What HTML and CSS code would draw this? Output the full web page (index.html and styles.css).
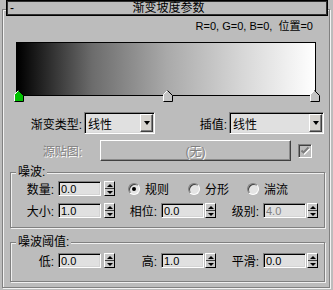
FILE: index.html
```html
<!DOCTYPE html>
<html lang="zh">
  <head>
    <meta charset="UTF-8" />
    <meta name="viewport" content="width=device-width, initial-scale=1.0" />
    <title>渐变坡度参数</title>
    <link rel="stylesheet" href="styles.css">
  </head>
  <body>
    <div class="rollout">
      <div class="title">
        <span class="minus">-</span>
        <span class="title-text">渐变坡度参数</span>
        <span></span>
      </div>

      <div class="info">R=0, G=0, B=0,&nbsp; 位置=0</div>

      <div class="ramp">
        <svg class="flag" style="left: calc(0% - 4px)" width="10" height="12" viewBox="0 0 10 12">
          <path d="M0.5 11.5V4.5L4.5 0.5L9.5 5.5V11.5Z" fill="#00c000" />
          <path d="M0.5 11.5V4.5L4.5 0.5" stroke="#fff" fill="none" />
          <path d="M4.5 0.5L9.5 5.5V11.5H0.5" stroke="#000" fill="none" />
        </svg>
        <svg class="flag" style="left: calc(50% - 4px)" width="10" height="12" viewBox="0 0 10 12">
          <path d="M0.5 11.5V4.5L4.5 0.5L9.5 5.5V11.5Z" fill="#c4c4c4" />
          <path d="M0.5 11.5V4.5L4.5 0.5" stroke="#fff" fill="none" />
          <path d="M4.5 0.5L9.5 5.5V11.5H0.5" stroke="#000" fill="none" />
        </svg>
        <svg class="flag" style="left: calc(100% - 5px)" width="10" height="12" viewBox="0 0 10 12">
          <path d="M0.5 11.5V4.5L4.5 0.5L9.5 5.5V11.5Z" fill="#c4c4c4" />
          <path d="M0.5 11.5V4.5L4.5 0.5" stroke="#fff" fill="none" />
          <path d="M4.5 0.5L9.5 5.5V11.5H0.5" stroke="#000" fill="none" />
        </svg>
      </div>

      <div class="row row-type">
        <label class="lbl lbl-type">渐变类型:</label>
        <div class="combo combo-type"><span>线性</span><i class="drop"></i></div>
        <label class="lbl lbl-interp">插值:</label>
        <div class="combo combo-interp"><span>线性</span><i class="drop"></i></div>
      </div>

      <div class="row row-map">
        <span class="lbl lbl-type disabled">源贴图:</span>
        <button class="map-btn" disabled>(无)</button>
        <span class="check">
          <svg width="12" height="12" viewBox="0 0 12 12">
            <path d="M2.5 5.5L4.5 7.5L9.5 2.5" stroke="#fff" stroke-width="2" fill="none" transform="translate(1 1)" />
            <path d="M2.5 5.5L4.5 7.5L9.5 2.5" stroke="#7c7c7c" stroke-width="2" fill="none" />
          </svg>
        </span>
      </div>

      <fieldset class="group noise">
        <legend>噪波:</legend>
        <div class="line">
          <label class="lbl c1">数量:</label>
          <input class="num" value="0.0" />
          <span class="spin"><i class="up"></i><i class="dn"></i></span>
          <span class="radio-item r1"><span class="radio on"></span>规则</span>
          <span class="radio-item r2"><span class="radio"></span>分形</span>
          <span class="radio-item"><span class="radio"></span>湍流</span>
        </div>
        <div class="line">
          <label class="lbl c1">大小:</label>
          <input class="num" value="1.0" />
          <span class="spin"><i class="up"></i><i class="dn"></i></span>
          <label class="lbl c2">相位:</label>
          <input class="num" value="0.0" />
          <span class="spin tight"><i class="up"></i><i class="dn"></i></span>
          <label class="lbl c3">级别:</label>
          <input class="num off" value="4.0" disabled />
          <span class="spin tight"><i class="up"></i><i class="dn"></i></span>
        </div>
      </fieldset>

      <fieldset class="group thresh">
        <legend>噪波阈值:</legend>
        <div class="line">
          <label class="lbl c1">低:</label>
          <input class="num" value="0.0" />
          <span class="spin"><i class="up"></i><i class="dn"></i></span>
          <label class="lbl c2">高:</label>
          <input class="num" value="1.0" />
          <span class="spin tight"><i class="up"></i><i class="dn"></i></span>
          <label class="lbl c3">平滑:</label>
          <input class="num" value="0.0" />
          <span class="spin tight"><i class="up"></i><i class="dn"></i></span>
        </div>
      </fieldset>
    </div>
  </body>
</html>
```

FILE: styles.css
```css
body {
  margin: 0;
  width: 333px;
  height: 290px;
  overflow: hidden;
  background-color: #bcbcbc;
  font-family: "Liberation Sans", "Noto Sans CJK SC", sans-serif;
  font-size: 12px;
  color: #000;
}
.rollout {
  margin: 9px 0 0 2px;
  width: 328px;
  box-sizing: border-box;
  border: 1px solid #808080;
  box-shadow: inset 1px 1px 0 #f2f2f2, 1px 1px 0 #f2f2f2;
  padding-bottom: 5px;
}
.title {
  margin: -10px 1px 0 3px;
  height: 16px;
  box-sizing: border-box;
  border: 1px solid #000;
  box-shadow: inset 1px 1px 0 #303030, inset -1px -1px 0 #303030;
  background-color: #bcbcbc;
  display: grid;
  grid-template-columns: 1fr auto 1fr;
  align-items: center;
  padding-left: 3px;
  line-height: 14px;
}
.minus {
  justify-self: start;
}
.info {
  height: 26px;
  box-sizing: border-box;
  padding: 3px 16px 0 0;
  text-align: right;
  font-size: 11px;
  line-height: 14px;
}
.ramp {
  position: relative;
  margin-left: 13px;
  width: 300px;
  height: 54px;
  box-sizing: border-box;
  border: 1px solid #000;
  border-left-width: 2px;
  background: linear-gradient(to right, #000 0%, #6c6c6c 25%, #a9a9a9 50%, #d6d6d6 75%, #fff 100%);
}
.flag {
  position: absolute;
  bottom: -7px;
  display: block;
}
.row {
  display: flex;
  align-items: center;
}
.lbl {
  box-sizing: border-box;
  text-align: right;
  white-space: nowrap;
}
.disabled {
  color: #808080;
  text-shadow: 1px 1px 0 #fff;
}
.row-type {
  margin-top: 16px;
  height: 22px;
}
.lbl-type {
  width: 79px;
}
.lbl-interp {
  width: 72px;
}
.combo {
  margin-left: 2px;
  height: 22px;
  box-sizing: border-box;
  display: flex;
  align-items: center;
  padding-left: 3px;
  border: 1px solid;
  border-color: #808080 #fff #fff #808080;
  box-shadow: inset 1px 1px 0 #000, inset -1px -1px 0 #d8d8d8;
  background-color: #e0e0e0;
}
.combo-type {
  width: 71px;
}
.combo-interp {
  width: 95px;
}
.drop {
  margin-left: auto;
  margin-right: 1px;
  width: 13px;
  height: 18px;
  box-sizing: border-box;
  display: flex;
  align-items: center;
  justify-content: center;
  border: 1px solid;
  border-color: #fff #404040 #404040 #fff;
  box-shadow: inset -1px -1px 0 #808080;
  background-color: #d6d3ce;
}
.drop::after {
  content: "";
  border-left: 3.5px solid transparent;
  border-right: 3.5px solid transparent;
  border-top: 4px solid #000;
}
.row-map {
  margin-top: 6px;
  height: 21px;
}
.map-btn {
  margin-left: 18px;
  width: 191px;
  height: 21px;
  padding: 0;
  box-sizing: border-box;
  font: inherit;
  color: #808080;
  text-shadow: 1px 1px 0 #fff;
  background-color: #bcbcbc;
  border: 1px solid;
  border-color: #fff #404040 #404040 #fff;
  box-shadow: inset -1px -1px 0 #8a8a8a;
}
.check {
  margin-left: 7px;
  width: 14px;
  height: 14px;
  box-sizing: border-box;
  display: flex;
  align-items: center;
  justify-content: center;
  border: 1px solid;
  border-color: #808080 #fff #fff #808080;
  box-shadow: inset 1px 1px 0 #404040;
}
.group {
  margin: 4px 0 0 7px;
  width: 315px;
  min-width: 0;
  box-sizing: border-box;
  border: 1px solid #808080;
  box-shadow: inset 1px 1px 0 #f0f0f0, 1px 1px 0 #f0f0f0;
  padding: 2px 0 9px 0;
}
.group legend {
  margin-left: 5px;
  padding: 0 2px;
  line-height: 14px;
  background-color: #bcbcbc;
}
.thresh {
  margin-top: 7px;
  padding: 4px 0 13px 0;
}
.line {
  display: flex;
  align-items: center;
  height: 15px;
}
.line + .line {
  margin-top: 7px;
}
.c1,
.c3 {
  width: 47px;
  padding-right: 4px;
}
.c2 {
  width: 46px;
  padding-right: 4px;
}
.num {
  margin: 0;
  width: 43px;
  height: 15px;
  box-sizing: border-box;
  padding: 0 2px;
  font-family: "Liberation Sans", sans-serif;
  font-size: 11px;
  color: #000;
  background-color: #e0e0e0;
  border: 1px solid;
  border-color: #808080 #fff #fff #808080;
  box-shadow: inset 1px 1px 0 #000, inset -1px -1px 0 #d4d4d4;
  outline: none;
}
.num.off {
  color: #808080;
}
.spin {
  margin-left: 3px;
  width: 11px;
  height: 15px;
  box-sizing: border-box;
  display: flex;
  flex-direction: column;
  border: 1px solid;
  border-color: #fff #000 #000 #fff;
  background-color: #c8c8c8;
}
.spin.tight {
  margin-left: 1px;
}
.spin i {
  flex: 1;
  display: flex;
  align-items: center;
  justify-content: center;
}
.spin i + i {
  border-top: 1px solid #404040;
}
.spin .up::after {
  content: "";
  border-left: 3px solid transparent;
  border-right: 3px solid transparent;
  border-bottom: 3px solid #000;
}
.spin .dn::after {
  content: "";
  border-left: 3px solid transparent;
  border-right: 3px solid transparent;
  border-top: 3px solid #000;
}
.radio-item {
  display: flex;
  align-items: center;
  gap: 5px;
  white-space: nowrap;
}
.r1 {
  margin-left: 13px;
  width: 60px;
}
.r2 {
  width: 59px;
}
.radio {
  width: 12px;
  height: 12px;
  box-sizing: border-box;
  border-radius: 50%;
  border: 1px solid;
  border-color: #808080 #fff #fff #808080;
  box-shadow: inset 1px 1px 0 #404040;
  background-color: #e4e4e4;
  display: flex;
  align-items: center;
  justify-content: center;
}
.radio.on::after {
  content: "";
  width: 4px;
  height: 4px;
  border-radius: 50%;
  background-color: #000;
}
```
